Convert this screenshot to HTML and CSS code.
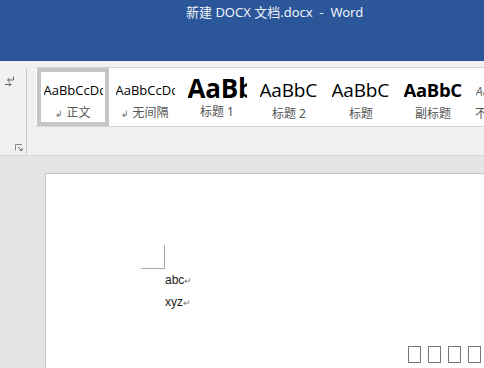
FILE: index.html
```html
<!DOCTYPE html>
<html lang="zh-CN">
<head>
<meta charset="UTF-8" />
<title>新建 DOCX 文档.docx - Word</title>
<link rel="stylesheet" href="styles.css">
</head>
<body>

<div class="titlebar">
    <span class="title">新建 DOCX 文档.docx&nbsp;&nbsp;-&nbsp;&nbsp;Word</span>
</div>

<div class="ribbon">
    <div class="side">
        <svg class="para-icon" width="10" height="12" viewBox="0 0 10 12">
            <path d="M8.5 0.5 V4 H3" fill="none" stroke="#666" stroke-width="1"/>
            <path d="M4.5 2 L2.5 4 L4.5 6" fill="none" stroke="#666" stroke-width="1"/>
            <path d="M0 8.5 H6" fill="none" stroke="#666" stroke-width="1"/>
            <path d="M4 6.5 L6 8.5 L4 10.5" fill="none" stroke="#666" stroke-width="1"/>
        </svg>
        <svg class="launcher" width="8" height="7" viewBox="0 0 8 7">
            <path d="M0.5 6.5 V0.5 H7" fill="none" stroke="#888" stroke-width="1"/>
            <path d="M3 3 L7 7 M7 4 V7 H4" fill="none" stroke="#666" stroke-width="1"/>
        </svg>
    </div>

    <div class="gallery">
        <div class="style-item selected">
            <div class="preview normal">AaBbCcDd</div>
            <div class="label"><span class="mark">↲</span> 正文</div>
        </div>
        <div class="style-item">
            <div class="preview normal">AaBbCcDd</div>
            <div class="label"><span class="mark">↲</span> 无间隔</div>
        </div>
        <div class="style-item">
            <div class="preview h1">AaBbC</div>
            <div class="label">标题 1</div>
        </div>
        <div class="style-item">
            <div class="preview h2">AaBbC</div>
            <div class="label">标题 2</div>
        </div>
        <div class="style-item">
            <div class="preview h2">AaBbC</div>
            <div class="label">标题</div>
        </div>
        <div class="style-item">
            <div class="preview sub">AaBbC</div>
            <div class="label">副标题</div>
        </div>
        <div class="style-item">
            <div class="preview em">AaBbCcDd</div>
            <div class="label">不明显强调</div>
        </div>
    </div>
</div>

<div class="doc">
    <div class="page">
        <div class="corner"></div>
        <div class="lines">
            <div class="line">abc<span class="ret">↵</span></div>
            <div class="line">xyz<span class="ret">↵</span></div>
        </div>
        <div class="boxes">
            <span></span><span></span><span></span><span></span>
        </div>
    </div>
</div>

</body>
</html>
```

FILE: styles.css
```css
body {
    margin: 0;
    width: 484px;
    height: 368px;
    overflow: hidden;
    font-family: "Noto Sans", "Noto Sans CJK SC", sans-serif;
    background: #e5e5e5;
    display: flex;
    flex-direction: column;
}

.titlebar {
    height: 61px;
    background: #2b579a;
    padding-left: 186px;
    box-sizing: border-box;
}

.title {
    display: block;
    padding-top: 3px;
    color: #eef2f8;
    font-size: 13px;
    line-height: 18px;
    white-space: nowrap;
}

/* Ribbon */
.ribbon {
    height: 95px;
    background: #f1f1f1;
    border-bottom: 1px solid #d5d5d5;
    box-sizing: border-box;
    display: flex;
}

.side {
    width: 26px;
    margin-top: 7px;
    margin-bottom: 1px;
    border-right: 1px solid #c6c6c6;
    display: flex;
    flex-direction: column;
    justify-content: space-between;
    align-items: flex-start;
}

.para-icon {
    margin: 8px 0 0 5px;
}

.launcher {
    margin: 0 0 3px 15px;
}

.gallery {
    margin: 6px 0 0 9px;
    height: 60px;
    flex: 1;
    background: #fff;
    border-top: 1px solid #d4d4d4;
    border-bottom: 1px solid #d4d4d4;
    box-sizing: border-box;
    display: flex;
    padding-left: 1px;
    overflow: hidden;
}

.style-item {
    width: 72px;
    flex: none;
    box-sizing: border-box;
    border: 4px solid transparent;
    display: flex;
    flex-direction: column;
    align-items: center;
    overflow: hidden;
}

.style-item.selected {
    border-color: #c6c6c6;
}

.preview {
    height: 32px;
    width: 59px;
    overflow: hidden;
    white-space: nowrap;
    color: #000;
    font-family: "Open Sans", sans-serif;
    line-height: 1;
    display: flex;
    align-items: center;
}

.preview.normal {
    font-size: 13px;
    letter-spacing: 0;
    padding-top: 4px;
}

.preview.h1 {
    font-size: 26px;
    font-weight: 700;
    letter-spacing: -0.2px;
}

.preview.h2 {
    font-size: 19px;
    letter-spacing: -0.2px;
    padding-top: 2px;
}

.preview.sub {
    font-size: 18.5px;
    font-weight: 700;
    letter-spacing: -0.3px;
    padding-top: 2px;
}

.preview.em {
    font-size: 13px;
    font-style: italic;
    color: #666;
    padding-top: 4px;
}

.label {
    font-size: 12px;
    line-height: 16px;
    color: #555;
    white-space: nowrap;
}

.mark {
    font-size: 9px;
    color: #666;
}

/* Document */
.doc {
    flex: 1;
    padding: 17px 0 0 45px;
    display: flex;
}

.page {
    flex: 1;
    background: #fff;
    border-left: 1px solid #c6c6c6;
    border-top: 1px solid #c6c6c6;
    padding: 71px 0 0 95px;
    display: flex;
    flex-direction: column;
}

.corner {
    width: 23px;
    height: 23px;
    border-right: 1px solid #a8a8a8;
    border-bottom: 1px solid #a8a8a8;
}

.lines {
    margin: 1px 0 0 24px;
    font-family: "Liberation Sans", sans-serif;
    font-size: 12px;
    line-height: 21px;
    color: #222;
}

.ret {
    font-size: 9px;
    color: #777;
}

.boxes {
    margin-top: auto;
    margin-bottom: 5px;
    display: flex;
    justify-content: flex-end;
    gap: 7px;
    padding-right: 3px;
}

.boxes span {
    width: 11px;
    height: 15px;
    border: 1px solid #777;
}
```
